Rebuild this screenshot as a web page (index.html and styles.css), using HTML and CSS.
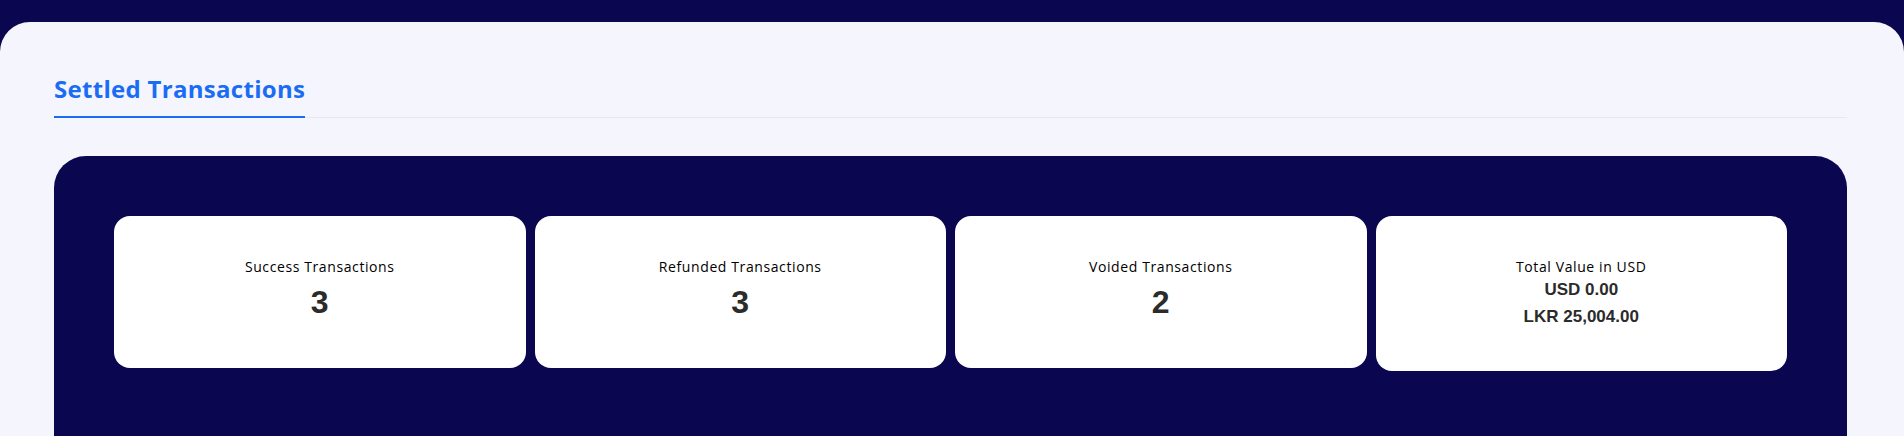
FILE: index.html
```html
<!DOCTYPE html>
<html lang="en">
<head>
<meta charset="utf-8">
<title>Settled Transactions</title>
<link rel="stylesheet" href="styles.css">
</head>
<body>
<main class="panel">
  <nav class="tabs">
    <div class="tab active">Settled Transactions</div>
  </nav>
  <section class="summary">
    <div class="stats">
      <div class="stat">
        <p class="label">Success Transactions</p>
        <p class="count">3</p>
      </div>
      <div class="stat">
        <p class="label">Refunded Transactions</p>
        <p class="count">3</p>
      </div>
      <div class="stat">
        <p class="label">Voided Transactions</p>
        <p class="count">2</p>
      </div>
      <div class="stat">
        <p class="label">Total Value in USD</p>
        <p class="amount">USD 0.00</p>
        <p class="amount">LKR 25,004.00</p>
      </div>
    </div>
  </section>
</main>
</body>
</html>
```
FILE: styles.css
```css
html, body {
  margin: 0;
  padding: 0;
  height: 100%;
  overflow: hidden;
}
body {
  background: #0b0650;
  padding-top: 22px;
  box-sizing: border-box;
  font-family: "Open Sans", "Liberation Sans", sans-serif;
}
.panel {
  height: 100%;
  box-sizing: border-box;
  background: #f5f6fd;
  border-radius: 30px 30px 0 0;
  padding: 51px 57px 0 54px;
  display: flex;
  flex-direction: column;
}
.tabs {
  display: flex;
  border-bottom: 1px solid #e6e7ef;
}
.tab {
  font-size: 24px;
  line-height: 32px;
  font-weight: 700;
  letter-spacing: 0.3px;
  color: #1a6cf4;
  padding-bottom: 11px;
  margin-bottom: -1px;
}
.tab.active {
  border-bottom: 2px solid #1a6cf4;
}
.summary {
  flex: 1;
  margin-top: 38px;
  background: #0b0650;
  border-radius: 32px 32px 0 0;
  padding: 60px;
}
.stats {
  display: grid;
  grid-template-columns: repeat(4, 1fr);
  gap: 9px;
  align-items: start;
}
.stat {
  background: #ffffff;
  border-radius: 16px;
  padding: 41px 16px 40px;
  text-align: center;
}
.stat p {
  margin: 0;
}
.label {
  font-size: 14px;
  line-height: 20px;
  letter-spacing: 0.6px;
  color: #000000;
  margin-bottom: 3px;
}
.count {
  font-family: "Liberation Sans", Arial, sans-serif;
  font-weight: 700;
  font-size: 32px;
  line-height: 38px;
  color: #2b2b2b;
  margin-top: 6px !important;
  margin-bottom: 7px !important;
}
.amount {
  font-family: "Liberation Sans", Arial, sans-serif;
  font-weight: 700;
  font-size: 17px;
  line-height: 20px;
  color: #2b2b2b;
  margin-top: 3px !important;
  margin-bottom: 3px !important;
}
.amount + .amount {
  margin-top: 7px !important;
  margin-bottom: 4px !important;
}
```
